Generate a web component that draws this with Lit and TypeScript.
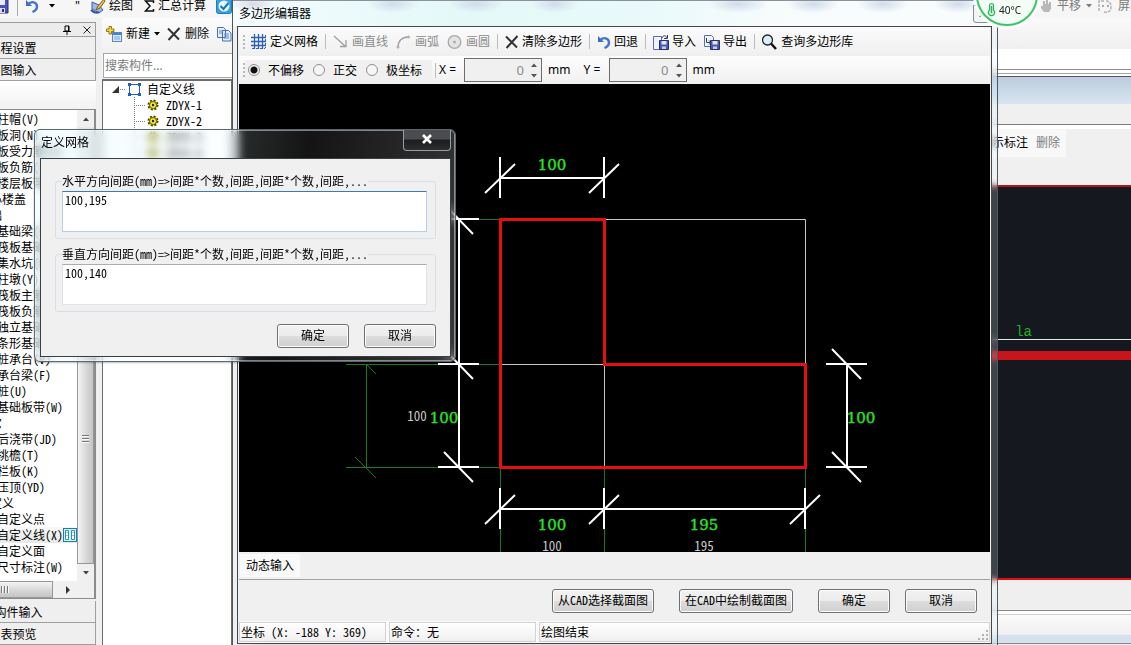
import { LitElement, html, svg, css, type TemplateResult } from "lit";
import { customElement, property } from "lit/decorators.js";
import { classMap } from "lit/directives/class-map.js";

const base = css`
  * { box-sizing: border-box; }
  :host {
    font: 12px/16px "Noto Sans Mono CJK SC", "Noto Sans CJK SC", sans-serif;
    color: #000;
  }
  button, input, textarea { font: inherit; color: inherit; margin: 0; border-radius: 0; }
  svg { display: block; flex: none; }
  .ui { font-family: "Noto Sans", "Noto Sans CJK SC", sans-serif; }
  .push {
    height: 24px; min-width: 72px; padding: 0 5px 2px;
    border: 1px solid #707070; border-radius: 3px;
    box-shadow: inset 0 0 0 1px #fcfcfc;
    background: linear-gradient(#f2f2f2 0, #ebebeb 50%, #dddddd 50%, #cfcfcf 100%);
    white-space: nowrap;
  }
`;

const icons: Record<string, TemplateResult> = {
  save: html`<svg width="16" height="16" viewBox="0 0 16 16"><path d="M1 1h14v14H2l-1-1z" fill="#4a50b4" stroke="#2a2c7c"/><path d="M4 1h8v6H4z" fill="#e6ecfa"/><path d="M4 10h8v5H4z" fill="#d8d8ec"/><path d="M9 11h2v3H9z" fill="#2a2c7c"/></svg>`,
  undo: html`<svg width="14" height="14" viewBox="0 0 14 14"><path d="M1 1v6h6z" fill="#3c6cc8"/><path d="M3 5.500C6 1.500 12 3 12 7.500c0 3-2 4.500-4.500 5.500" fill="none" stroke="#4474d0" stroke-width="2.400"/></svg>`,
  brush: html`<svg width="16" height="16" viewBox="0 0 16 16"><path d="M2 4l7 3 4 5-4 3-7-4z" fill="#9db8e8" stroke="#3b5fa8"/><path d="M14 1L8 8l-2 4 4-2 5-7z" fill="#e8c050" stroke="#7a6020"/><path d="M1 12q4 4 8 2" fill="none" stroke="#2f56a4" stroke-width="2"/></svg>`,
  check: html`<svg width="16" height="16" viewBox="0 0 16 16"><rect x=".5" y=".5" width="15" height="15" rx="2" fill="#38a0e0" stroke="#1f78bc"/><circle cx="8" cy="8" r="5.500" fill="#e8f6ff"/><path d="M4.500 8l3 3 5-6" fill="none" stroke="#1674bc" stroke-width="2"/></svg>`,
  plus: html`<svg width="16" height="16" viewBox="0 0 16 16"><rect x="6.500" y="6.500" width="9" height="9" fill="#d8e8fa" stroke="#5b86c4"/><path d="M7 7h8v2H7z" fill="#4a80cc"/><path d="M8 11h6M8 13h6" stroke="#7fa4d8"/><path d="M3 .500h2.500V3H8v2.500H5.500V8H3V5.500H.500V3H3z" fill="#f4d840" stroke="#8f7a18"/></svg>`,
  cross: html`<svg width="14" height="14" viewBox="0 0 14 14"><path d="M1 1.500L12 12.500M12.500 1L1.500 13" stroke="#333" stroke-width="2" fill="none"/></svg>`,
  copy: html`<svg width="16" height="16" viewBox="0 0 16 16"><path d="M1.500 1.500h6l2 2v8h-8zM6.500 4.500h6l2.500 2.500v8h-8.500z" fill="#e4eefc" stroke="#4470b8"/><path d="M3 5h4M3 7h3M8 8h5M8 10h5M8 12h5" stroke="#5a88cc"/></svg>`,
  grid: html`<svg width="16" height="16" viewBox="0 0 16 16"><path d="M3.500 0v15M7.500 0v15M11.500 0v15M0 3.500h15M0 7.500h15M0 11.500h15" stroke="#2f5fb4" stroke-width="1.300" fill="none"/><path d="M14.500 1v13M1 14.500h13" stroke="#2f5fb4" stroke-dasharray="2 2"/></svg>`,
  line: html`<svg width="16" height="16" viewBox="0 0 16 16"><path d="M1 2l11 10M7 12.500h6V6" stroke="#a0a0a0" fill="none" stroke-width="1.300"/></svg>`,
  arc: html`<svg width="16" height="16" viewBox="0 0 16 16"><path d="M2 13C2 7 6 3 12 3" stroke="#a0a0a0" fill="none" stroke-width="1.300"/><circle cx="2" cy="13" r="1.500" fill="#b0b0b0"/><circle cx="12.500" cy="3" r="1.500" fill="#b0b0b0"/></svg>`,
  circle: html`<svg width="16" height="16" viewBox="0 0 16 16"><circle cx="7.500" cy="8" r="6.300" fill="#e4e4e4" stroke="#a8a8a8" stroke-width="1.300"/><circle cx="7.500" cy="8" r="1.500" fill="#b0b0b0"/></svg>`,
  import: html`<svg width="16" height="16" viewBox="0 0 16 16"><path d="M.500 2.500h8v13h-8z" fill="#eef3fc" stroke="#5870a8"/><path d="M9 4c1-3 4-3 5 0M14.500 1v3.500H11" fill="none" stroke="#303a6c"/><path d="M6.500 6.500h9v9h-9z" fill="#4a5ab0" stroke="#28306c"/><path d="M8.500 7h5v3.500h-5z" fill="#dfe6f8"/><path d="M9 12.500h4V15H9z" fill="#c8cce4"/></svg>`,
  export: html`<svg width="16" height="16" viewBox="0 0 16 16"><path d="M.500 1.500h7l2 2v9h-9z" fill="#eef3fc" stroke="#5870a8"/><path d="M2.500 4v4.500h4M5 6.500l2 2-2 2" fill="none" stroke="#303a6c"/><path d="M6.500 6.500h9v9h-9z" fill="#4a5ab0" stroke="#28306c"/><path d="M8.500 7h5v3.500h-5z" fill="#dfe6f8"/><path d="M9 12.500h4V15H9z" fill="#c8cce4"/></svg>`,
  search: html`<svg width="16" height="16" viewBox="0 0 16 16"><circle cx="5.500" cy="6" r="5" fill="#d8f0fa" stroke="#222" stroke-width="1.300"/><path d="M9 9.500l5 5.500" stroke="#111" stroke-width="2.500"/></svg>`,
  gear: html`<svg width="12" height="12" viewBox="0 0 12 12"><circle cx="6" cy="6" r="4.500" fill="#f0e020" stroke="#4a4600" stroke-width="2" stroke-dasharray="2 1.530"/><circle cx="6" cy="6" r="3.500" fill="#f4ea30" stroke="#6c6400"/><circle cx="6" cy="6" r="1.200" fill="#222"/></svg>`,
  frame: html`<svg width="15" height="15" viewBox="0 0 15 15"><rect x="2.500" y="2.500" width="10" height="10" fill="#fff" stroke="#1f5fc0"/><path d="M1 1h3v3H1zM11 1h3v3h-3zM1 11h3v3H1zM11 11h3v3h-3z" fill="#1f5fc0"/></svg>`,
  hand: html`<svg width="12" height="14" viewBox="0 0 12 14"><path d="M3 2h2v3h1V1h2v4h1V3h2v7l-2 3H4L1 9V7h2z" fill="#b8b8b8"/></svg>`,
  rotate: html`<svg width="16" height="16" viewBox="0 0 16 16"><path d="M2 13V3h5M9 3c4 0 5 3 5 6 0 4-3 6-7 5" fill="none" stroke="#b4b4b4" stroke-width="1.500" stroke-dasharray="3 1"/><path d="M5 7h2v2H5zM10 7h2v2h-2z" fill="#aaa"/></svg>`,
  down: html`<svg width="6" height="4" viewBox="0 0 6 4"><path d="M0 0h6L3 3.500z" fill="currentColor"/></svg>`,
  up: html`<svg width="6" height="4" viewBox="0 0 6 4"><path d="M0 4h6L3 .500z" fill="currentColor"/></svg>`,
  right: html`<svg width="4" height="8" viewBox="0 0 4 8"><path d="M0 0v8l4-4z" fill="#333"/></svg>`,
};

interface ToolItem { icon: string; label: string; off?: boolean; }

const editorTools: ToolItem[][] = [
  [{ icon: "grid", label: "定义网格" }],
  [{ icon: "line", label: "画直线", off: true }, { icon: "arc", label: "画弧", off: true }, { icon: "circle", label: "画圆", off: true }],
  [{ icon: "cross", label: "清除多边形" }],
  [{ icon: "undo", label: "回退" }],
  [{ icon: "import", label: "导入" }, { icon: "export", label: "导出" }],
  [{ icon: "search", label: "查询多边形库" }],
];

/** The section drawing: grid lines, dimension lines and the outline. */
@customElement("section-canvas")
class SectionCanvas extends LitElement {
  static styles = [base, css`
    :host { display: block; background: #000; overflow: hidden; }
    .drawing { width: 100%; height: 100%; }
    .grid { stroke: #c4c4c4; fill: none; }
    .guide { stroke: #1f7a1f; fill: none; }
    .dim { stroke: #fff; stroke-width: 2; fill: none; }
    .outline { stroke: #e60f0f; stroke-width: 3; fill: none; }
    .size { fill: #2be02b; font: 15px "DejaVu Serif", serif; stroke: #2be02b; stroke-width: .4; }
    .note { fill: #c8c8c8; font-size: 13px; }
  `];

  render() {
    const slashH = (x: number, y: number) => `M${x - 15} ${y + 15}L${x + 15} ${y - 14}M${x} ${y - 21}V${y + 20}`;
    const slashV = (x: number, y: number) => `M${x - 15} ${y - 15}L${x + 14} ${y + 15}M${x - 21} ${y}H${x + 20}`;
    return html`<svg class="drawing" role="img" aria-label="截面图">
      ${svg`<g transform="translate(-239 -84)">
        <path class="guide" d="M459 219.500H500M346 364.500H500M346 467.500H500M366.500 364V467M366 364L376 374M355 457L376 478M500.500 467V560M604.500 467V560M805.500 467V560"/>
        <path class="grid" d="M604 219.500H805.500V364M500 364.500H604.500V467"/>
        <path class="dim" d="M500 178H604${slashH(500, 178)}${slashH(604, 178)}"/>
        <path class="dim" d="M500 509H805${slashH(500, 509)}${slashH(604, 509)}${slashH(805, 509)}"/>
        <path class="dim" d="M459 219V467${slashV(459, 219)}${slashV(459, 364)}${slashV(459, 467)}"/>
        <path class="dim" d="M847 364V467${slashV(847, 364)}${slashV(847, 467)}"/>
        <path class="outline" d="M500.500 219.500H604.500V364.500H805.500V467.500H500.500Z"/>
        <g class="size" text-anchor="middle">
          <text x="552" y="170">100</text>
          <text x="552" y="530">100</text>
          <text x="704" y="530">195</text>
          <text x="444" y="423">100</text>
          <text x="861" y="423">100</text>
        </g>
        <g class="note" text-anchor="middle">
          <text x="552" y="551">100</text>
          <text x="704" y="551">195</text>
          <text x="417" y="421">100</text>
        </g>
      </g>`}
    </svg>`;
  }
}

@customElement("polygon-editor")
class PolygonEditor extends LitElement {
  static styles = [base, css`
    :host {
      display: flex; flex-direction: column; padding: 0 5px 1px 4px;
      border: 1px solid #50565e; border-width: 0 1px;
      background: rgba(225, 245, 255, .2); backdrop-filter: blur(3px);
    }
    .title {
      display: flex; justify-content: space-between; height: 26px; margin: 0 -5px 0 -4px; padding: 5px 6px 0 6px;
      border-top: 1px solid #8b9299;
      background:
        radial-gradient(22px 8px at 20px 3px, #d8dae6, transparent),
        radial-gradient(26px 9px at 160px 3px, #cfdcec, transparent),
        radial-gradient(28px 9px at 243px 3px, #cfdcec, transparent),
        radial-gradient(24px 9px at 322px 3px, #cfdcec, transparent),
        radial-gradient(30px 9px at 505px 3px, #cfdcec, transparent),
        radial-gradient(26px 9px at 580px 3px, #cfdcec, transparent),
        radial-gradient(26px 9px at 650px 3px, #cfdcec, transparent),
        radial-gradient(24px 9px at 725px 3px, #cfdcec, transparent),
        linear-gradient(90deg, #f4fcfd 0, #e4f8f8 30%, #eafafa 55%, #f6fbfb 70%, #fafcfc 100%);
    }
    .caption { line-height: 16px; }
    .close { width: 18px; height: 18px; padding: 0; margin-top: -1px; border: 1px solid #8a8f96; border-radius: 0 0 3px 3px; background: #f2f4f6; font-size: 10px; line-height: 14px; color: #555; }
    .client {
      flex: 1; min-height: 0; display: flex; flex-direction: column;
      border: 1px solid #44484e; padding: 0 1px; background: #f0f0f0;
    }
    .tools, .modes { display: flex; align-items: center; white-space: nowrap; }
    .tools { height: 29px; padding-left: 4px; background: linear-gradient(#fbfbfb, #efefef); }
    .modes { height: 28px; padding-left: 4px; background: linear-gradient(#fdfdfd, #f0f0f0); }
    .grip { width: 2px; height: 14px; background: repeating-linear-gradient(#b8b8b8 0 2px, transparent 2px 4px); }
    .tools .grip { margin-right: 2px; }
    .tool { display: flex; align-items: center; gap: 3px; height: 22px; padding: 0 4px; border: 0; background: none; }
    .tool.off { color: #8c8c8c; }
    .sep { width: 1px; height: 15px; margin: 0 3px; background: #bcbcbc; }
    .radios { display: flex; align-items: center; gap: 9px; height: 20px; padding: 0 10px 0 3px; background: #f0f0f0; }
    .choice { display: flex; align-items: center; gap: 8px; }
    .radio { appearance: none; width: 12px; height: 12px; border: 1px solid #8e8f8f; border-radius: 50%; background: #f6f6f6; }
    .radio:checked { background: radial-gradient(circle, #111 0 3px, #f6f6f6 4px); }
    .field { display: flex; align-items: center; gap: 6px; margin-right: 13px; }
    .axis { min-width: 19px; }
    .spin { display: flex; width: 78px; height: 24px; border: 1px solid #6c6c6c; background: #f0f0f0; color: #8c8c8c; }
    .value { flex: 1; min-width: 0; border: 0; padding: 0 3px; background: none; text-align: right; font-size: 13px; }
    .steps { display: flex; flex-direction: column; width: 14px; }
    .step { flex: 1; display: grid; place-items: center; padding: 0; border: 0; background: none; color: #555; }
    .canvas { flex: 1; min-height: 0; }
    .tabs { height: 28px; padding: 2px 1px 0; border-bottom: 1px solid #a0a0a0; background: #f0f0f0; }
    .tab { height: 23px; padding: 0 6px; border: 0; background: #fafafa; }
    .actions { display: flex; justify-content: flex-end; gap: 25px; padding: 9px 13px 8px; }
    .pair { display: flex; gap: 15px; }
    .status { display: flex; gap: 3px; height: 22px; padding: 1px 0; background: #fafafa; }
    .cell { width: 147px; padding: 1px; border: 1px solid #d2d2d2; background: linear-gradient(#fff, #f0f0f0); white-space: nowrap; }
    .cell.last { flex: 1; display: flex; justify-content: space-between; align-items: flex-end; }
  `];

  private tool(t: ToolItem) {
    return html`<button class=${classMap({ tool: true, ui: true, off: !!t.off })} ?disabled=${t.off}>${icons[t.icon]}${t.label}</button>`;
  }

  private spin(axis: string) {
    return html`<div class="field ui">
      <label class="axis" for=${axis}>${axis} =</label>
      <div class="spin">
        <input class="value ui" id=${axis} value="0" inputmode="numeric" />
        <div class="steps">
          <button class="step" aria-label=${axis + " +"}>${icons.up}</button>
          <button class="step" aria-label=${axis + " -"}>${icons.down}</button>
        </div>
      </div>
      <span>mm</span>
    </div>`;
  }

  render() {
    return html`
      <div class="title ui"><span class="caption">多边形编辑器</span><button class="close" aria-label="关闭">✕</button></div>
      <div class="client">
        <div class="tools">
          <span class="grip"></span>
          ${editorTools.map((g, i) => html`${i ? html`<span class="sep"></span>` : ""}${g.map((t) => this.tool(t))}`)}
        </div>
        <div class="modes">
          <span class="grip"></span>
          <div class="radios">
            ${["不偏移", "正交", "极坐标"].map((m, i) => html`<label class="choice"><input class="radio" type="radio" name="mode" ?checked=${i === 0} />${m}</label>`)}
          </div>
          <span class="sep"></span>
          ${this.spin("X")}${this.spin("Y")}
        </div>
        <section-canvas class="canvas"></section-canvas>
        <div class="tabs"><button class="tab ui">动态输入</button></div>
        <div class="actions">
          <button class="push">从CAD选择截面图</button>
          <button class="push">在CAD中绘制截面图</button>
          <div class="pair"><button class="push">确定</button><button class="push">取消</button></div>
        </div>
        <div class="status">
          <span class="cell">坐标 (X: -188 Y: 369)</span>
          <span class="cell">命令：无</span>
          <span class="cell last"><span>绘图结束</span>
            <svg width="10" height="10" viewBox="0 0 10 10"><path d="M8 0h2v2H8zM8 4h2v2H8zM8 8h2v2H8zM4 4h2v2H4zM4 8h2v2H4zM0 8h2v2H0z" fill="#b4b4b4"/></svg>
          </span>
        </div>
      </div>`;
  }
}

@customElement("grid-dialog")
class GridDialog extends LitElement {
  static styles = [base, css`
    :host {
      display: block; padding: 0 4px 4px 5px; border: 1px solid #5c6670; border-radius: 6px;
      background: linear-gradient(100deg, rgba(225, 250, 255, .45), rgba(255, 255, 255, .08) 60%, rgba(255, 255, 255, .22));
      box-shadow: inset 0 0 0 1px rgba(255, 255, 255, .45), 0 1px 2px rgba(0, 0, 0, .25);
      backdrop-filter: blur(4px);
    }
    .title { display: flex; justify-content: space-between; height: 28px; padding: 5px 0 0 1px; }
    .close {
      display: grid; place-items: center; width: 48px; height: 21px; margin-top: -5px; padding: 0 0 2px;
      border: 1px solid #9a9ea2; border-top: 0; border-radius: 0 0 4px 4px;
      background: linear-gradient(#4a4c4e 0 45%, #1c1d1e 50%, #2c2d2e);
    }
    .client { border: 1px solid #3a3e42; background: #f0f0f0; padding: 14px 14px 8px; }
    .group { margin: 0 0 7px; padding: 2px 8px 6px 6px; border: 1px solid #d5dfe5; border-radius: 3px; min-width: 0; }
    .name { padding: 0; white-space: nowrap; }
    .area { display: block; width: 100%; height: 41px; padding: 0 2px; border: 1px solid #e2e3ea; border-top-color: #abadb3; background: #fff; resize: none; outline: none; overflow: hidden; }
    .area.active { border-color: #b5cfe7; border-top-color: #3d7bad; }
    .row { display: flex; justify-content: flex-end; gap: 15px; padding-top: 5px; }
  `];

  render() {
    const group = (name: string, value: string, active: boolean) => html`<fieldset class="group">
      <legend class="name">${name}方向间距(mm)=>间距*个数,间距,间距*个数,间距,...</legend>
      <textarea class=${classMap({ area: true, active })} aria-label=${name} .value=${value}></textarea>
    </fieldset>`;
    return html`
      <div class="title ui"><span>定义网格</span>
        <button class="close" aria-label="关闭"><svg width="12" height="10" viewBox="0 0 12 10"><path d="M2 1l8 8M10 1L2 9" stroke="#fff" stroke-width="2.600"/></svg></button>
      </div>
      <div class="client">
        ${group("水平", "100,195", true)}
        ${group("垂直", "100,140", false)}
        <div class="row"><button class="push">确定</button><button class="push">取消</button></div>
      </div>`;
  }
}

/** Names with a leading # are category rows. */
const modules = [
  "柱帽(V)", "板洞(N)", "板受力筋(S)", "板负筋(F)", "楼层板带(H)", "#空心楼盖", "#基础", "基础梁(F)", "筏板基础(M)",
  "集水坑(K)", "柱墩(Y)", "筏板主筋(R)", "筏板负筋(X)", "独立基础(D)", "条形基础(T)", "桩承台(V)", "承台梁(F)", "桩(U)",
  "基础板带(W)", "#其它", "后浇带(JD)", "挑檐(T)", "栏板(K)", "压顶(YD)", "#自定义", "自定义点", "自定义线(X)", "自定义面", "尺寸标注(W)",
];

@customElement("module-panel")
class ModulePanel extends LitElement {
  @property() selected = "自定义线(X)";

  static styles = [base, css`
    :host { display: flex; flex-direction: column; background: #f0f0f0; overflow: hidden; }
    .head { display: flex; align-items: center; justify-content: flex-end; gap: 12px; height: 15px; padding-right: 4px; border: 1px solid #9c9c9c; background: #ececec; }
    .section { display: block; height: 22px; padding: 0; border: 0; border-bottom: 1px solid #a0a0a0; border-right: 1px solid #a0a0a0; background: #efefef; text-align: center; }
    .blank { height: 28px; background: linear-gradient(#fff, #f2f2f2); }
    .box { flex: 1; min-height: 0; display: grid; grid-template: minmax(0, 1fr) 17px / 1fr 17px; margin-bottom: 2px; border: 1px solid #8c8c8c; border-right-width: 2px; background: #f0f0f0; }
    .list { padding-top: 1px; background: #fff; overflow: hidden; }
    .item { display: flex; height: 16px; padding-left: 66px; white-space: nowrap; }
    .item.cat { padding-left: 47px; }
    .item.sel { background: linear-gradient(#f8f8f8, #e8e8e8); }
    .book { margin-top: 1px; }
    .vbar { display: flex; flex-direction: column; background: #e8e8e8; color: #444; }
    .arrow { display: grid; place-items: center; width: 17px; height: 17px; padding: 0; border: 0; background: #f0f0f0; }
    .track { flex: 19; }
    .thumb { flex: 25; display: grid; place-items: center; border: 1px solid #989898; background: linear-gradient(90deg, #f4f4f4, #dadada 50%, #c4c4c4); }
    .ridge { width: 7px; height: 9px; background: repeating-linear-gradient(#777 0 1px, #fafafa 1px 2px, transparent 2px 3px); }
    .hbar { display: flex; align-items: stretch; }
    .hthumb { width: 122px; border: 1px solid #989898; background: linear-gradient(#f4f4f4, #dadada 50%, #c4c4c4); padding: 4px 0 0 69px; }
    .hridge { width: 8px; height: 7px; background: repeating-linear-gradient(90deg, #777 0 1px, #fafafa 1px 2px, transparent 2px 3px); }
    .hbar .arrow { margin-left: 6px; }
  `];

  render() {
    return html`
      <div class="head">
        <svg width="8" height="10" viewBox="0 0 8 10"><path d="M2 1h4v5H2zM0 6.500h8M4 7v3" fill="none" stroke="#000"/><path d="M5 1h1v5H5z"/></svg>
        <svg width="8" height="8" viewBox="0 0 8 8"><path d="M.500.500l7 7M7.500.500l-7 7" stroke="#222"/></svg>
      </div>
      <button class="section">工程设置</button>
      <button class="section">绘图输入</button>
      <div class="blank"></div>
      <div class="box">
        <div class="list">
          ${modules.map((m) => html`<div class=${classMap({ item: true, cat: m[0] === "#", sel: m === this.selected })}>${m.replace("#", "")}${m === this.selected
            ? html`<svg class="book" width="14" height="14" viewBox="0 0 14 14"><rect x=".5" y=".5" width="13" height="13" fill="#d8f0f8" stroke="#1f7fa4"/><path d="M2.500 2.500h3v9h-3zM8.500 2.500h3v9h-3z" fill="#fff" stroke="#2a90b8"/><path d="M4 4v1M4 7v1M10 4v1M10 7v1" stroke="#2a90b8"/></svg>` : ""}</div>`)}
        </div>
        <div class="vbar">
          <button class="arrow" aria-label="上">${icons.up}</button>
          <div class="track"></div>
          <div class="thumb"><span class="ridge"></span></div>
          <button class="arrow" aria-label="下">${icons.down}</button>
        </div>
        <div class="hbar"><div class="hthumb"><div class="hridge"></div></div><button class="arrow" aria-label="右">${icons.right}</button></div>
      </div>
      <button class="section">单构件输入</button>
      <button class="section">报表预览</button>`;
  }
}

@customElement("component-tree")
class ComponentTree extends LitElement {
  static styles = [base, css`
    :host { display: flex; flex-direction: column; background: #f4f4f4; overflow: hidden; }
    .tools { display: flex; align-items: center; height: 35px; padding: 0 0 3px 4px; white-space: nowrap; background: linear-gradient(#fcfcfc, #f0f0f0); }
    .tool { display: flex; align-items: center; gap: 4px; padding: 0; margin-right: 7px; border: 0; background: none; }
    .find { height: 25px; margin-left: 1px; padding: 0 1px; border: 1px solid #a4a8ac; border-right: 0; background: #fff; }
    .find::placeholder { color: #7c7c7c; }
    .tree { flex: 1; margin-top: 1px; border: 1px solid #6c6c6c; border-width: 2px 1px 0 1px; background: #fff; }
    .root, .leaf { display: flex; align-items: center; height: 16px; white-space: nowrap; }
    .root { padding-left: 9px; }
    .dots { width: 6px; height: 1px; margin: 0 1px; background: repeating-linear-gradient(90deg, #888 0 1px, transparent 1px 2px); }
    .root-name { margin-left: 5px; }
    .leaf { padding-left: 31px; }
    .stem { align-self: stretch; width: 11px; margin-right: 2px; background:
      repeating-linear-gradient(#888 0 1px, transparent 1px 2px) 0 0 / 1px 100% no-repeat,
      repeating-linear-gradient(90deg, #888 0 1px, transparent 1px 2px) 0 8px / 100% 1px no-repeat; }
    .leaf-name { margin-left: 7px; }
  `];

  render() {
    return html`
      <div class="tools">
        <button class="tool ui">${icons.plus}新建${icons.down}</button>
        <button class="tool ui">${icons.cross}删除</button>
        <button class="tool" aria-label="复制">${icons.copy}</button>
      </div>
      <input class="find ui" placeholder="搜索构件..." aria-label="搜索构件" />
      <div class="tree">
        <div class="root">
          <svg width="7" height="7" viewBox="0 0 7 7"><path d="M7 0v7H0z" fill="#333"/></svg>
          <span class="dots"></span>${icons.frame}<span class="root-name">自定义线</span>
        </div>
        ${[1, 2, 3, 4].map((n) => html`<div class="leaf"><span class="stem"></span>${icons.gear}<span class="leaf-name">ZDYX-${n}</span></div>`)}
      </div>`;
  }
}

@customElement("app-root")
class AppRoot extends LitElement {
  static styles = [base, css`
    :host { display: flex; flex-direction: column; position: relative; height: 100vh; overflow: hidden; background: #f0f0f0; }
    .bar { display: flex; align-items: flex-end; height: 18px; padding-bottom: 4px; white-space: nowrap; background: #f6f6f6; }
    .main, .right { display: flex; align-items: center; height: 16px; }
    .main { margin-left: -7px; }
    .tool { display: flex; align-items: center; gap: 3px; padding: 0; border: 0; background: none; }
    .vline { width: 1px; height: 20px; margin: 0 7px 0 8px; background: #a8a8a8; }
    .gap { margin-left: 10px; }
    .quote { margin: 0 10px 0 20px; }
    .right { width: 91px; margin-left: auto; gap: 5px; overflow: hidden; color: #7c7c7c; }
    .body { flex: 1; min-height: 0; display: flex; }
    .modules { width: 166px; margin: 4px 6px 0 -70px; }
    .tree { width: 130px; margin-right: 20px; }
    .view { flex: 1; min-width: 0; display: flex; flex-direction: column; background: #f0f0f0; }
    .band { height: 31px; background: linear-gradient(#fafafa, #efefef); }
    .rule { height: 28px; border-bottom: 1px solid #505860; background: linear-gradient(#fff 20px, #8c8c8c 20px 21px, #fff 21px 24px, #a4a4a4 24px 25px, #fff 25px); }
    .caption { height: 27px; background: linear-gradient(#bccddd, #d9e4f1); }
    .strip { height: 25px; border-bottom: 4px solid #fff; box-shadow: inset 0 -1px #7c7c7c; }
    .marks { height: 28px; margin-right: 65px; padding: 0 6px; display: flex; justify-content: flex-end; align-items: center; gap: 8px; background: #f8f8f8; }
    .plain { padding: 0; border: 0; background: none; }
    .faint { color: #7c7c7c; }
    .model { flex: 1; margin-top: 28px; padding-top: 138px; border: 2px solid #e01010; border-width: 2px 0; border-top-color: #b01818; background: #15181f; }
    .tag { height: 14px; padding-right: 99px; text-align: right; color: #1fb01f; font: 14px/14px "Liberation Mono", monospace; }
    .axis { height: 12px; border-top: 1px solid #e8e8e8; }
    .beam { height: 9px; background: #c8141c; }
    .foot { height: 65px; background: linear-gradient(#efefef 30px, #888 30px 31px, #fff 31px 34px, #ccc 34px 35px, #fafafa 35px, #f0f0f0 55px, #d5e1ee 55px 63px, #888 63px 64px, #f0f0f0 64px); }
    .editor { position: absolute; top: 0; bottom: 0; left: 232px; right: 133px; }
    .dialog { position: absolute; top: 129px; left: 34px; width: 422px; }
    .temp { position: absolute; top: 0; right: 90px; width: 68px; height: 31px; }
    .degrees { font: 10px "Noto Sans", sans-serif; fill: #222; }
  `];

  render() {
    return html`
      <div class="bar ui">
        <div class="main">
          ${icons.save}<span class="vline"></span>
          <button class="tool" aria-label="撤销">${icons.undo}</button>
          <span class="gap">${icons.down}</span><span class="quote">"</span>
          <button class="tool">${icons.brush}绘图</button>
          <button class="tool gap"><svg width="12" height="14" viewBox="0 0 12 14"><path d="M10.500 4V2H2.500L7 7l-4.500 5h8V10" fill="none" stroke="#111" stroke-width="1.500"/></svg><span>汇总计算</span></button>
          <button class="tool gap" aria-label="检查">${icons.check}</button>
        </div>
        <div class="right">
          ${icons.hand}<button class="tool">平移</button>${icons.down}${icons.rotate}<button class="tool">屏幕</button>
        </div>
      </div>
      <div class="body">
        <module-panel class="modules"></module-panel>
        <component-tree class="tree"></component-tree>
        <div class="view">
          <div class="band"></div><div class="rule"></div><div class="caption"></div><div class="strip"></div>
          <div class="marks ui"><button class="plain">显示标注</button><button class="plain faint">删除</button></div>
          <div class="model"><div class="tag">la</div><div class="axis"></div><div class="beam"></div></div>
          <div class="foot"></div>
        </div>
      </div>
      <polygon-editor class="editor"></polygon-editor>
      <grid-dialog class="dialog"></grid-dialog>
      <svg class="temp" viewBox="0 0 68 31">
        <circle cx="34" cy="-5" r="34" fill="#fff" opacity=".85"/>
        <circle cx="34" cy="-5" r="30" fill="#f4fcf6" stroke="#3cc468" stroke-width="2"/>
        <path d="M16.500 10V5.500a2 2 0 0 1 4 0V10a3.200 3.200 0 1 1-4 0z" fill="#d8f6e0" stroke="#2cb458" stroke-width="1.200"/><path d="M18.500 6v7" stroke="#2cb458" stroke-width="1.500"/>
        <text class="degrees" x="26" y="14">40°C</text>
      </svg>`;
  }
}
